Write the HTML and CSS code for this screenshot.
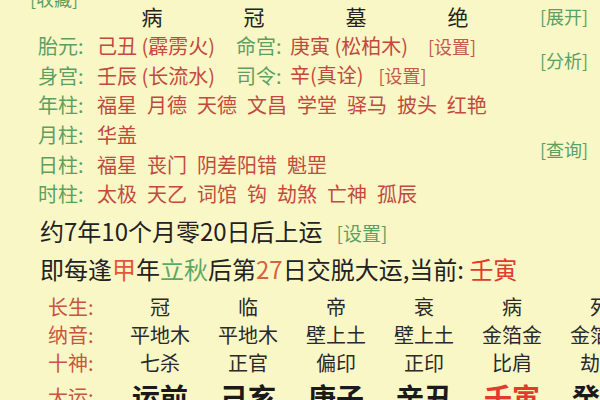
FILE: index.html
```html
<!DOCTYPE html>
<html lang="zh-CN">
<head>
<meta charset="utf-8">
<link rel="stylesheet" href="styles.css">
</head>
<body>
<div class="fav"><span class="g">[收藏]</span></div>
<div class="top">
  <div class="main">
    <div class="stages">
      <span>病</span><span>冠</span><span>墓</span><span>绝</span>
    </div>
    <div class="info">
      <span class="g">胎元:</span>
      <span class="r">己丑 (霹雳火)</span>
      <span class="g">命宫:</span>
      <span class="r">庚寅 (松柏木)<span class="set r2 w1">[设置]</span></span>

      <span class="g">身宫:</span>
      <span class="r">壬辰 (长流水)</span>
      <span class="g">司令:</span>
      <span class="r">辛(真诠)<span class="set r2 w2">[设置]</span></span>

      <span class="g">年柱:</span>
      <span class="r wide words">福星 月德 天德 文昌 学堂 驿马 披头 红艳</span>

      <span class="g">月柱:</span>
      <span class="r wide words">华盖</span>

      <span class="g">日柱:</span>
      <span class="r wide words">福星 丧门 阴差阳错 魁罡</span>

      <span class="g">时柱:</span>
      <span class="r wide words">太极 天乙 词馆 钩 劫煞 亡神 孤辰</span>
    </div>
  </div>
  <div class="side">
    <span class="link l1">[展开]</span>
    <span class="link l2">[分析]</span>
    <span class="link l3">[查询]</span>
  </div>
</div>
<div class="line first">约7年10个月零20日后上运<span class="set g w3">[设置]</span></div>
<div class="line">即每逢<span class="o">甲</span>年<span class="gg">立秋</span>后第<span class="o2">27</span>日交脱大运,当前: <span class="br">壬寅</span></div>
<div class="table">
  <span class="lab">长生:</span>
  <span>冠</span><span>临</span><span>帝</span><span>衰</span><span>病</span><span>死</span>

  <span class="lab">纳音:</span>
  <span>平地木</span><span>平地木</span><span>壁上土</span><span>壁上土</span><span>金箔金</span><span>金箔金</span>

  <span class="lab">十神:</span>
  <span>七杀</span><span>正官</span><span>偏印</span><span>正印</span><span>比肩</span><span>劫财</span>

  <span class="lab big-lab">大运:</span>
  <span class="big">运前</span><span class="big">己亥</span><span class="big">庚子</span><span class="big">辛丑</span><span class="big br">壬寅</span><span class="big">癸卯</span>
</div>
</body>
</html>
```
FILE: styles.css
```css
html, body {
  margin: 0;
  padding: 0;
}
body {
  width: 600px;
  height: 400px;
  overflow: hidden;
  background: #faf7c7;
  font-family: "Noto Sans CJK SC", "Noto Sans", sans-serif;
  color: #2a2a2a;
}
.g { color: #5c9f62; }
.r { color: #c24a3c; }
.r2 { color: #c25a4c; }
.o { color: #e4553b; }
.o2 { color: #d8623f; }
.gg { color: #5ca866; }
.br { color: #e23b2b; }

.fav {
  font-size: 18px;
  line-height: 20px;
  padding-left: 30px;
  margin-top: -12px;
  margin-bottom: -7px;
}
.top {
  display: flex;
}
.main {
  flex: 1;
}
.stages {
  display: grid;
  grid-template-columns: repeat(4, 102px);
  padding-left: 101px;
  font-size: 21px;
  line-height: 30px;
  text-align: center;
  color: #222;
}
.info {
  display: grid;
  grid-template-columns: 59px 139px 54px 1fr;
  grid-auto-rows: 29.7px;
  align-items: center;
  margin-left: 38px;
  font-size: 20px;
  line-height: 29.7px;
  white-space: nowrap;
}
.wide {
  grid-column: 2 / -1;
}
.words {
  word-spacing: 5.5px;
}
.set {
  font-size: 18px;
}
.w1 { margin-left: 20px; }
.w2 { margin-left: 15px; }
.w3 { margin-left: 14px; }

.side {
  width: 60px;
  display: flex;
  flex-direction: column;
  font-size: 18px;
  line-height: 30px;
  color: #5c9f62;
}
.link { display: block; }
.l2 { margin-top: 14px; }
.l3 { margin-top: 59px; }

.line {
  font-size: 24px;
  line-height: 36px;
  padding-left: 40px;
  white-space: nowrap;
  color: #222;
}
.line .set {
  font-size: 19px;
}
.line.first {
  margin-top: 4px;
}
.table {
  display: grid;
  grid-template-columns: 68px repeat(6, 88px);
  grid-template-rows: 28px 28px 28px 40px;
  align-items: center;
  padding-left: 48px;
  margin-top: 6px;
  font-size: 20px;
  line-height: 28px;
  text-align: center;
  white-space: nowrap;
  color: #2a2a2a;
}
.table .lab {
  text-align: left;
  color: #c8553f;
}
.table .big {
  font-size: 28px;
  font-weight: 700;
  line-height: 40px;
  color: #1a1a1a;
}
.table .big.br { color: #e23b2b; }
```
